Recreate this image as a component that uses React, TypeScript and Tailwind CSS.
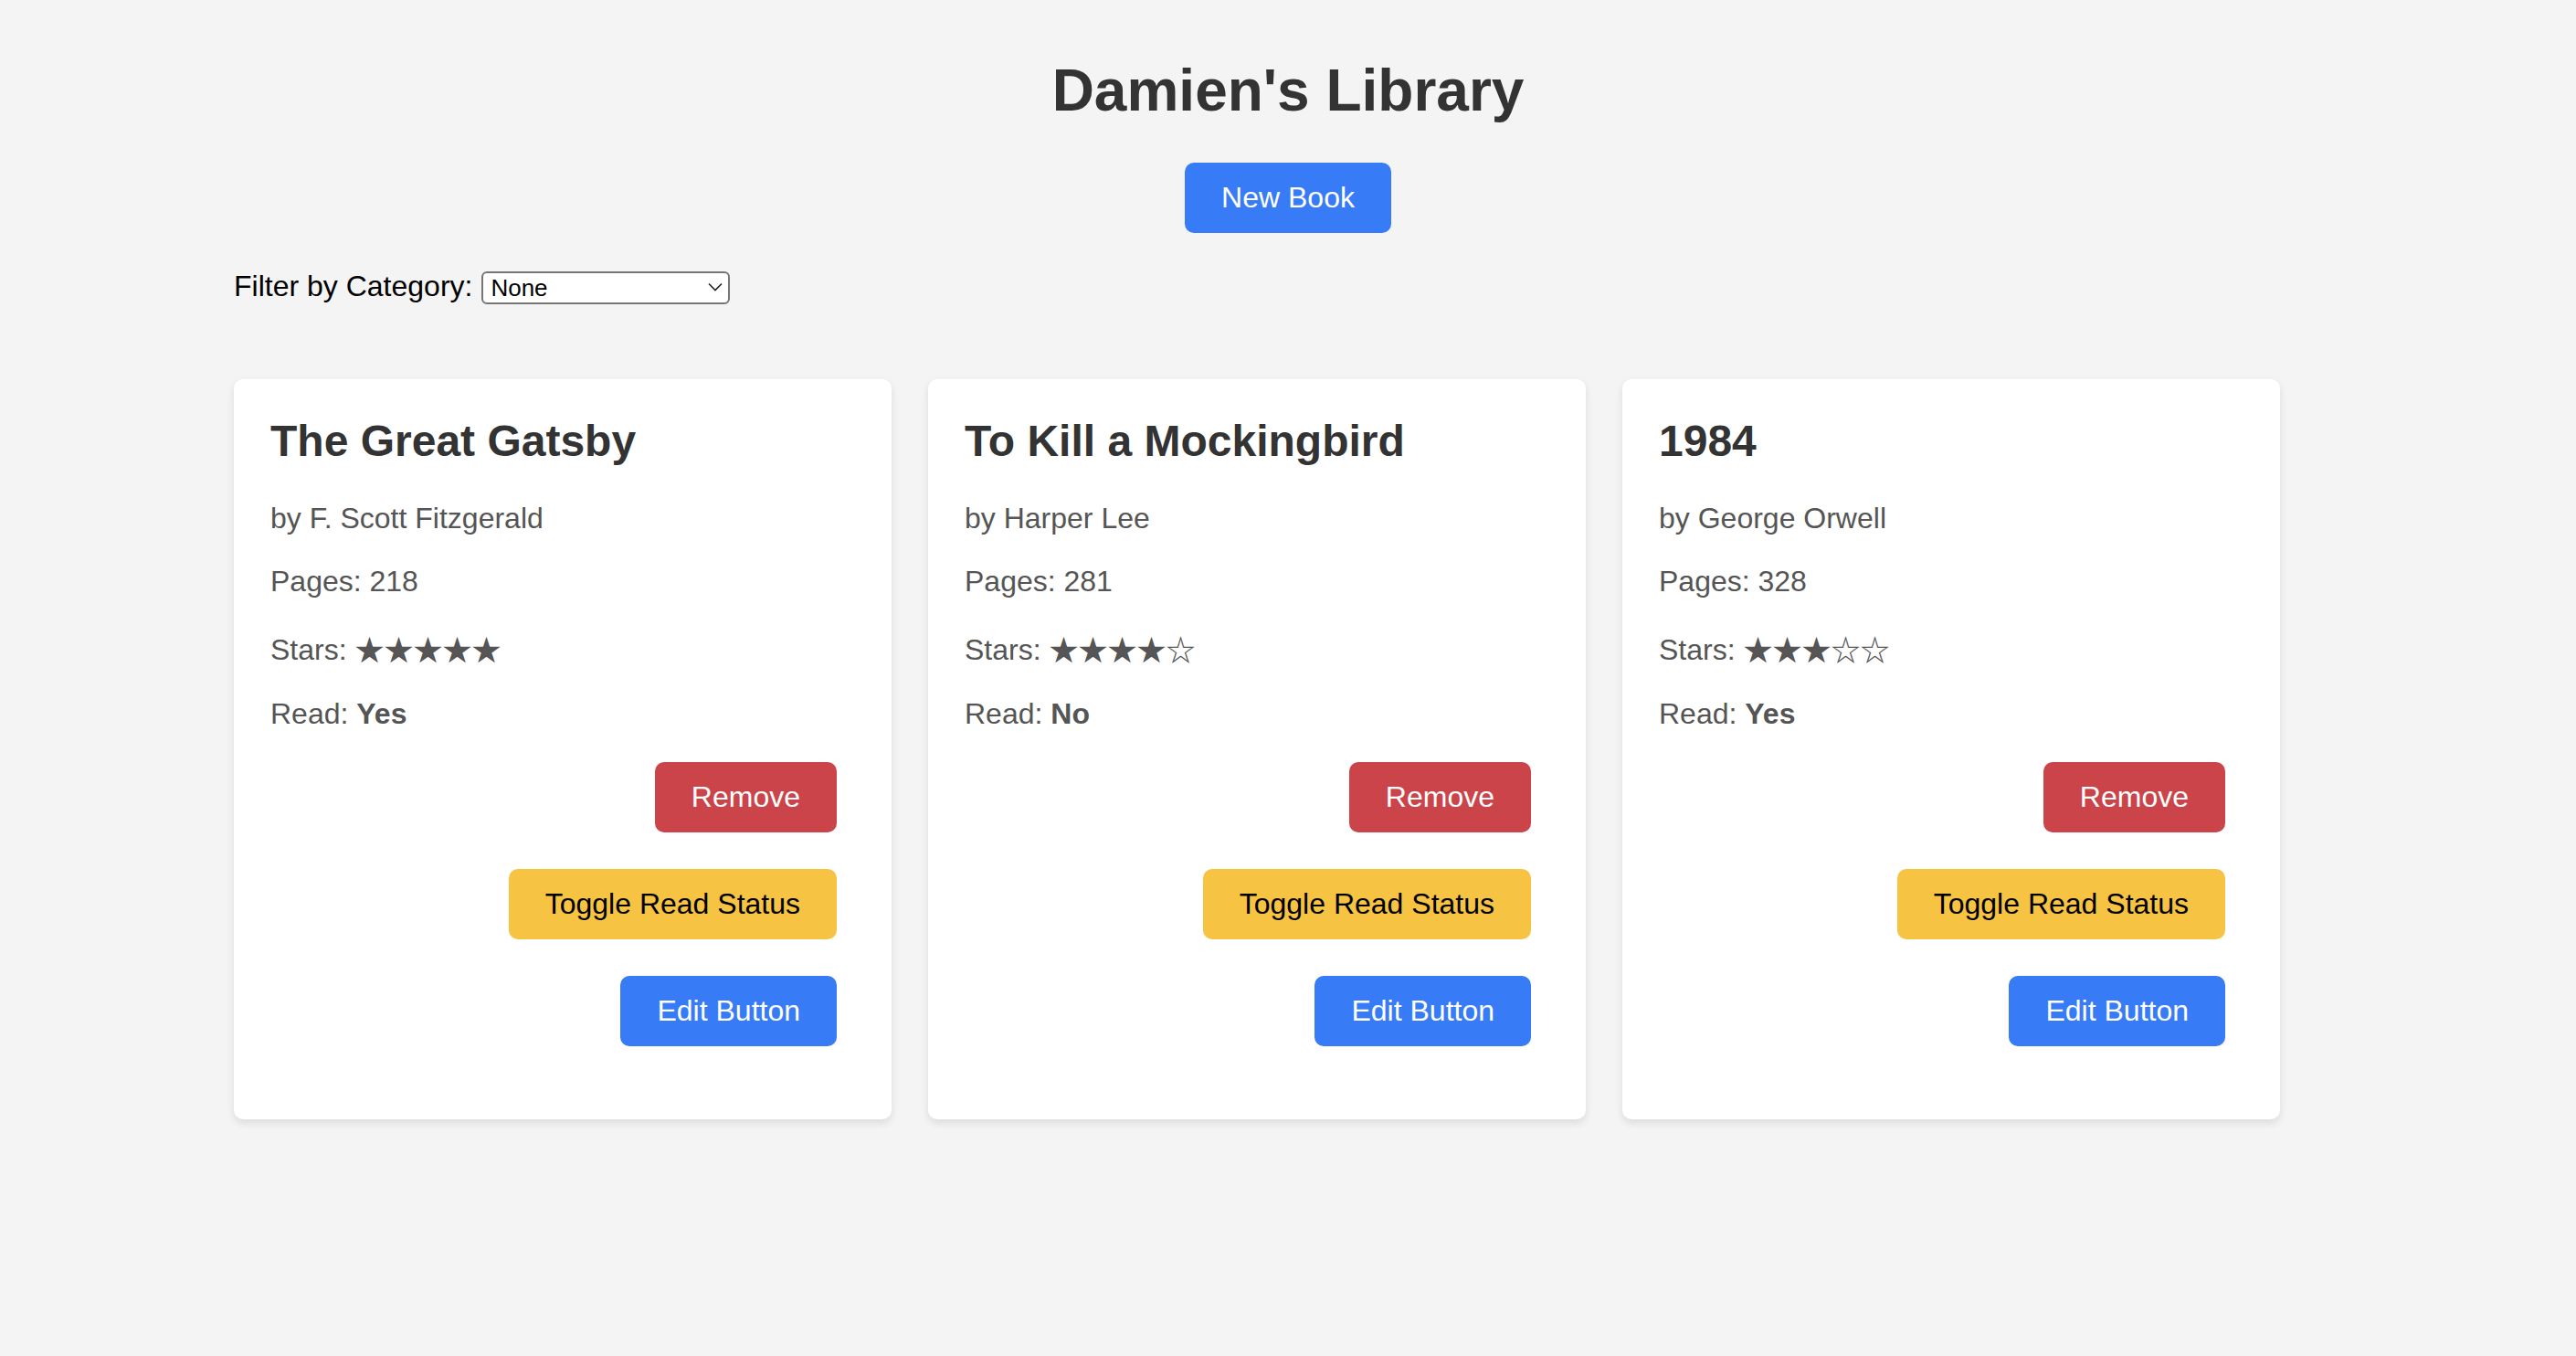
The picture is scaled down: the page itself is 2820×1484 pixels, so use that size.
const books = [
  { title: "The Great Gatsby", author: "F. Scott Fitzgerald", pages: 218, stars: 5, read: true },
  { title: "To Kill a Mockingbird", author: "Harper Lee", pages: 281, stars: 4, read: false },
  { title: "1984", author: "George Orwell", pages: 328, stars: 3, read: true },
];

function BookCard({ book }: { book: (typeof books)[number] }) {
  const stars = "★".repeat(book.stars) + "☆".repeat(5 - book.stars);
  return (
    <div className="w-[720px] h-[810px] bg-white rounded-[10px] shadow-[0_4px_10px_rgba(0,0,0,0.1)] pt-[40px] pl-[40px] pr-[60px] flex flex-col">
      <h2 className="text-[48px] leading-[55px] font-bold text-[#333]">{book.title}</h2>
      <p className="mt-[39px] text-[32px] leading-[37px] text-[#555]">by {book.author}</p>
      <p className="mt-[32px] text-[32px] leading-[37px] text-[#555]">Pages: {book.pages}</p>
      <p className="mt-[38px] text-[32px] leading-[37px] text-[#555]">
        Stars:{" "}
        <span className="font-['Noto_Sans_CJK_SC','DejaVu_Sans',sans-serif] text-[32px] leading-[0px] relative top-[1px]">
          {stars}
        </span>
      </p>
      <p className="mt-[33px] text-[32px] leading-[37px] text-[#555]">
        Read: <b className="font-bold">{book.read ? "Yes" : "No"}</b>
      </p>
      <div className="flex flex-col items-end">
        <button className="mt-[34px] h-[77px] px-[40px] rounded-[10px] bg-[#cb444a] text-white text-[32px] leading-[37px]">
          Remove
        </button>
        <button className="mt-[40px] h-[77px] px-[40px] rounded-[10px] bg-[#f6c343] text-black text-[32px] leading-[37px]">
          Toggle Read Status
        </button>
        <button className="mt-[40px] h-[77px] px-[40px] rounded-[10px] bg-[#377bf6] text-white text-[32px] leading-[37px]">
          Edit Button
        </button>
      </div>
    </div>
  );
}

export default function App() {
  return (
    <div className="min-h-screen bg-[#f4f4f4] font-['Liberation_Sans',Arial,sans-serif] pt-[62px] px-[256px]">
      <h1 className="text-center text-[64px] leading-[74px] font-bold text-[#333]">Damien's Library</h1>
      <div className="flex justify-center mt-[42px]">
        <button className="h-[77px] px-[40px] rounded-[10px] bg-[#377bf6] text-white text-[32px] leading-[37px]">
          New Book
        </button>
      </div>
      <div className="flex items-start h-[38px] mt-[40px]">
        <label className="text-[32px] leading-[37px] text-black">Filter by Category:</label>
        <div className="relative ml-[10px] mt-[2px]">
          <select className="appearance-none w-[272px] h-[36px] border-2 border-[#767676] rounded-[6px] bg-white pl-[8px] text-[26px] leading-[30px] text-black">
            <option>None</option>
          </select>
          <svg
            className="absolute right-[8px] top-[12px] pointer-events-none"
            width="16"
            height="10"
            viewBox="0 0 16 10"
            fill="none"
            stroke="#222"
            strokeWidth="1.6"
          >
            <path d="M1 1.5 L8 8.5 L15 1.5" />
          </svg>
        </div>
      </div>
      <div className="flex gap-[40px] mt-[82px]">
        {books.map((b) => (
          <BookCard key={b.title} book={b} />
        ))}
      </div>
    </div>
  );
}
